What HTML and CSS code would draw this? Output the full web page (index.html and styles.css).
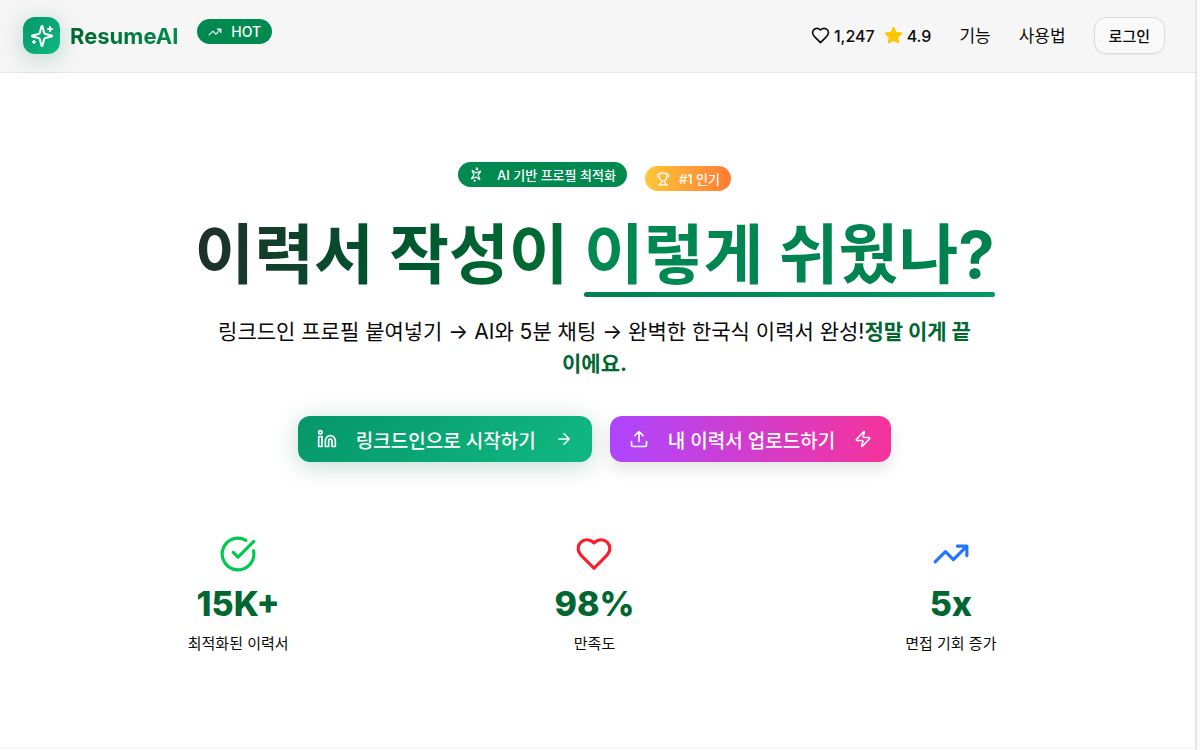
FILE: index.html
```html
<!DOCTYPE html>
<html lang="ko">
<head>
    <meta charset="UTF-8">
    <meta name="viewport" content="width=device-width, initial-scale=1.0">
    <title>ResumeAI</title>
    <link rel="stylesheet" href="styles.css">
</head>
<body>
    <div class="page">
        <header class="header">
            <div class="brand">
                <span class="logo">
                    <svg class="icon" width="24" height="24" viewBox="0 0 24 24"><path d="M9.937 15.5A2 2 0 0 0 8.5 14.063l-6.135-1.582a.5.5 0 0 1 0-.962L8.5 9.936A2 2 0 0 0 9.937 8.5l1.582-6.135a.5.5 0 0 1 .963 0L14.063 8.5A2 2 0 0 0 15.5 9.937l6.135 1.581a.5.5 0 0 1 0 .964L15.5 14.063a2 2 0 0 0-1.437 1.437l-1.582 6.135a.5.5 0 0 1-.963 0z"/><path d="M20 3v4M22 5h-4M4 17v2M5 18H3"/></svg>
                </span>
                <span class="brand-name">ResumeAI</span>
                <span class="badge badge-hot">
                    <svg class="icon" width="14" height="14" viewBox="0 0 24 24"><path d="M22 7l-8.500 8.500-5-5L2 17M16 7h6v6"/></svg>
                    HOT
                </span>
            </div>
            <nav class="nav">
                <div class="counts">
                    <span class="count">
                        <svg class="icon" width="19" height="19" viewBox="0 0 24 24"><path d="M19 14c1.490-1.460 3-3.210 3-5.500A5.500 5.500 0 0 0 16.500 3c-1.760 0-3 .5-4.500 2-1.500-1.500-2.740-2-4.500-2A5.500 5.500 0 0 0 2 8.500c0 2.300 1.500 4.050 3 5.500l7 7Z"/></svg>
                        1,247
                    </span>
                    <span class="count">
                        <svg class="icon star" width="19" height="19" viewBox="0 0 24 24"><path d="M12 2l3.090 6.260L22 9.270l-5 4.870 1.180 6.880L12 17.770l-6.180 3.250L7 14.140 2 9.270l6.910-1.010L12 2z"/></svg>
                        4.9
                    </span>
                </div>
                <a class="nav-link" href="#features">기능</a>
                <a class="nav-link" href="#how">사용법</a>
                <button class="login">로그인</button>
            </nav>
        </header>

        <main class="hero">
            <div class="badges">
                <span class="badge badge-ai">
                    <svg class="icon spin" width="14" height="14" viewBox="0 0 24 24"><path d="M9.937 15.5A2 2 0 0 0 8.5 14.063l-6.135-1.582a.5.5 0 0 1 0-.962L8.5 9.936A2 2 0 0 0 9.937 8.5l1.582-6.135a.5.5 0 0 1 .963 0L14.063 8.5A2 2 0 0 0 15.5 9.937l6.135 1.581a.5.5 0 0 1 0 .964L15.5 14.063a2 2 0 0 0-1.437 1.437l-1.582 6.135a.5.5 0 0 1-.963 0z"/><path d="M20 3v4M22 5h-4M4 17v2M5 18H3"/></svg>
                    AI 기반 프로필 최적화
                </span>
                <span class="badge badge-top">
                    <svg class="icon" width="14" height="14" viewBox="0 0 24 24"><path d="M6 9H4.500a2.500 2.500 0 0 1 0-5H6M18 9h1.500a2.500 2.500 0 0 0 0-5H18M4 22h16M10 14.660V17c0 .55-.47.98-.97 1.210C7.850 18.750 7 20.240 7 22M14 14.660V17c0 .55.47.98.97 1.210C16.150 18.750 17 20.240 17 22M18 2H6v7a6 6 0 0 0 12 0V2Z"/></svg>
                    #1 인기
                </span>
            </div>

            <h1 class="title"><span class="title-dark">이력서 작성이</span> <span class="title-green">이렇게 쉬웠나?</span></h1>

            <p class="subtitle">링크드인 프로필 붙여넣기 → AI와 5분 채팅 → 완벽한 한국식 이력서 완성!<strong>정말 이게 끝이에요.</strong></p>

            <div class="actions">
                <button class="btn btn-linkedin">
                    <svg class="icon" width="20" height="20" viewBox="0 0 24 24"><path d="M16 8a6 6 0 0 1 6 6v7h-4v-7a2 2 0 0 0-4 0v7h-4v-7a6 6 0 0 1 6-6zM2 9h4v12H2z"/><circle cx="4" cy="4" r="2"/></svg>
                    <span>링크드인으로 시작하기</span>
                    <svg class="icon" width="18" height="18" viewBox="0 0 24 24"><path d="M5 12h14M12 5l7 7-7 7"/></svg>
                </button>
                <button class="btn btn-upload">
                    <svg class="icon" width="20" height="20" viewBox="0 0 24 24"><path d="M21 15v4a2 2 0 0 1-2 2H5a2 2 0 0 1-2-2v-4M17 8l-5-5-5 5M12 3v12"/></svg>
                    <span>내 이력서 업로드하기</span>
                    <svg class="icon" width="18" height="18" viewBox="0 0 24 24"><path d="M4 14a1 1 0 0 1-.78-1.630l9.900-10.200a.5.5 0 0 1 .86.46l-1.920 6.020A1 1 0 0 0 13 10h7a1 1 0 0 1 .78 1.630l-9.900 10.200a.5.5 0 0 1-.86-.46l1.920-6.020A1 1 0 0 0 11 14z"/></svg>
                </button>
            </div>

            <div class="stats">
                <div class="stat">
                    <svg class="icon stat-check" width="38" height="38" viewBox="0 0 24 24"><path d="M21.801 10A10 10 0 1 1 17 3.335M9 11l3 3L22 4"/></svg>
                    <div class="stat-value">15K+</div>
                    <div class="stat-label">최적화된 이력서</div>
                </div>
                <div class="stat">
                    <svg class="icon stat-heart" width="38" height="38" viewBox="0 0 24 24"><path d="M19 14c1.490-1.460 3-3.210 3-5.500A5.500 5.500 0 0 0 16.500 3c-1.760 0-3 .5-4.500 2-1.500-1.500-2.740-2-4.500-2A5.500 5.500 0 0 0 2 8.500c0 2.300 1.500 4.050 3 5.500l7 7Z"/></svg>
                    <div class="stat-value">98%</div>
                    <div class="stat-label">만족도</div>
                </div>
                <div class="stat">
                    <svg class="icon stat-trend" width="38" height="38" viewBox="0 0 24 24"><path d="M22 7l-8.500 8.500-5-5L2 17M16 7h6v6"/></svg>
                    <div class="stat-value">5x</div>
                    <div class="stat-label">면접 기회 증가</div>
                </div>
            </div>
        </main>
    </div>
</body>
</html>
```
FILE: styles.css
```css
:root{
    --green: #008a50;
    --dark-green: #016630;
    --text: #0a0a0a;
}
*{
    padding: 0;
    margin: 0;
    box-sizing: border-box;
}
body{
    font-family: Inter, "Noto Sans CJK KR", sans-serif;
    color: var(--text);
    background-color: #fafafa;
}
.page{
    margin-right: 3px;
    border-right: 2px solid #e6e6e6;
    min-height: 100vh;
    background-color: white;
}
.icon{
    fill: none;
    stroke: currentColor;
    stroke-width: 2;
    stroke-linecap: round;
    stroke-linejoin: round;
    flex-shrink: 0;
}

/* header */
.header{
    display: flex;
    justify-content: space-between;
    align-items: center;
    height: 73px;
    padding: 0 30px 1px 23px;
    background-color: #f6f6f6;
    border-bottom: 1px solid #e6e6e6;
}
.brand{
    display: flex;
    align-items: center;
}
.logo{
    display: flex;
    align-items: center;
    justify-content: center;
    width: 37px;
    height: 37px;
    margin-right: 10px;
    border-radius: 12px;
    color: white;
    background: linear-gradient(135deg, #059669, #10b981);
    box-shadow: 0 4px 24px rgba(5, 120, 80, 0.25);
}
.brand-name{
    font-size: 22px;
    font-weight: 700;
    background: linear-gradient(90deg, #016630, #008a4a);
    background-clip: text;
    -webkit-background-clip: text;
    color: transparent;
}
.badge{
    display: inline-flex;
    align-items: center;
    height: 25px;
    border-radius: 13px;
    color: white;
    background-color: var(--green);
    font-size: 13px;
    font-weight: 500;
    white-space: nowrap;
}
.badge-hot{
    gap: 9px;
    margin: 0 0 8px 19px;
    padding: 0 11px;
    font-size: 14px;
}
.nav{
    display: flex;
    align-items: center;
    gap: 28px;
    font-size: 16px;
}
.counts{
    display: flex;
    gap: 9px;
    font-weight: 500;
}
.count{
    display: flex;
    align-items: center;
    gap: 4px;
}
.star{
    fill: #fdc700;
    color: #fdc700;
}
.nav-link{
    padding-bottom: 2px;
    color: var(--text);
    font-size: 17px;
    text-decoration: none;
}
.login{
    height: 37px;
    padding: 0 14px;
    border: 1px solid #dcdcdc;
    border-radius: 12px;
    background-color: #f9f9f9;
    box-shadow: 0 1px 2px rgba(0, 0, 0, 0.06);
    color: var(--text);
    font-family: inherit;
    font-size: 15px;
    font-weight: 500;
    cursor: pointer;
}

/* hero */
.hero{
    display: flex;
    flex-direction: column;
    align-items: center;
    padding: 89px 82px 92px 76px;
    border-bottom: 2px solid #f5f8f7;
    text-align: center;
}
.badges{
    display: flex;
    gap: 18px;
}
.badge-ai{
    gap: 14px;
    padding: 0 11px;
}
.badge-top{
    gap: 9px;
    margin-top: 4px;
    padding: 0 11px;
    background: linear-gradient(90deg, #ffc837, #ff7a35);
}
.spin{
    transform: rotate(-40deg);
}
.title{
    margin-top: 22px;
    font-size: 65px;
    line-height: 84px;
    font-weight: 700;
}
.title-dark, .title-green{
    display: inline-block;
    background: linear-gradient(100deg, #1f2e26, #00542e 50%, #007032);
    background-clip: text;
    -webkit-background-clip: text;
    color: transparent;
}
.title-green{
    position: relative;
    background-image: linear-gradient(90deg, #008a52, #008050);
}
.title-green::after{
    content: "";
    position: absolute;
    left: 0;
    right: 0;
    bottom: 0;
    height: 5px;
    border-radius: 3px;
    background: linear-gradient(90deg, #008050, #009a64);
}
.subtitle{
    max-width: 768px;
    margin-top: 19px;
    font-size: 21px;
    line-height: 32px;
}
.subtitle strong{
    color: var(--dark-green);
    font-weight: 700;
}
.actions{
    display: flex;
    gap: 18px;
    margin-top: 36px;
}
.btn{
    display: flex;
    align-items: center;
    gap: 19px;
    height: 46px;
    padding: 0 19px;
    border: none;
    border-radius: 12px;
    color: white;
    font-family: inherit;
    font-size: 19px;
    font-weight: 500;
    cursor: pointer;
}
.btn-linkedin{
    background: linear-gradient(135deg, #059669, #10b981);
    box-shadow: 0 4px 24px rgba(5, 120, 80, 0.25);
}
.btn-upload{
    background: linear-gradient(90deg, #ad46ff, #f6339a);
    box-shadow: 0 8px 16px rgba(0, 0, 0, 0.1);
}
.stats{
    display: grid;
    grid-template-columns: 1fr 1fr 1fr;
    gap: 32px;
    width: 100%;
    margin-top: 73px;
}
.stat{
    display: flex;
    flex-direction: column;
    align-items: center;
}
.stat-check{
    color: #00c950;
}
.stat-heart{
    color: #fb1c2c;
}
.stat-trend{
    color: #2176ff;
}
.stat-value{
    margin-top: 10px;
    color: var(--dark-green);
    font-size: 34px;
    line-height: 41px;
    font-weight: 800;
}
.stat-label{
    margin-top: 9px;
    font-size: 15px;
    line-height: 22px;
}
```
